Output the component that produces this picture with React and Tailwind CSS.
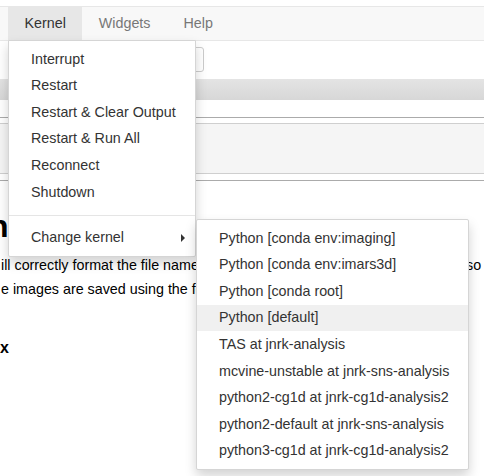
const kernelItems = ["Interrupt", "Restart", "Restart & Clear Output", "Restart & Run All", "Reconnect", "Shutdown"];

const kernels = [
  "Python [conda env:imaging]",
  "Python [conda env:imars3d]",
  "Python [conda root]",
  "Python [default]",
  "TAS at jnrk-analysis",
  "mcvine-unstable at jnrk-sns-analysis",
  "python2-cg1d at jnrk-cg1d-analysis2",
  "python2-default at jnrk-sns-analysis",
  "python3-cg1d at jnrk-cg1d-analysis2",
];

function MenuItem({ label, active, children }) {
  return (
    <li className={`h-[26.6px] flex items-center pl-[22px] pr-[12px] whitespace-nowrap ${active ? "bg-[#f0f0f0]" : ""}`}>
      <span className="flex-1">{label}</span>
      {children}
    </li>
  );
}

export default function App() {
  return (
    <div className="relative w-[484px] h-[476px] overflow-hidden bg-white text-[14.3px] text-[#333] font-['Liberation_Sans',Arial,sans-serif]">
      <div className="h-[6px]" />

      {/* menubar */}
      <div className="h-[35px] border-y border-[#e7e7e7] bg-[#f8f8f8] flex pl-[8px]">
        <div className="px-[16.5px] flex items-center bg-[#e7e7e7] text-[#333]">Kernel</div>
        <div className="px-[16.5px] flex items-center text-[#777]">Widgets</div>
        <div className="px-[16.5px] flex items-center text-[#777]">Help</div>
      </div>

      {/* toolbar */}
      <div className="h-[38px] pt-[6px] flex">
        <div className="ml-[120px] w-[84px] h-[25px] border border-[#ccc] rounded-[3px] bg-white" />
      </div>

      <div className="h-[21px] bg-gradient-to-b from-[#e4e4e4] to-[#d7d7d7]" />
      <div className="h-[17px]" />
      <div className="h-px bg-[#ababab]" />
      <div className="h-[5px]" />
      <div className="h-[51px] border-y border-[#cfcfcf] bg-[#f5f5f5]" />
      <div className="h-[6px]" />
      <div className="h-px bg-[#ababab]" />

      {/* notebook content */}
      <div className="pt-[29px] text-black">
        <div className="h-[32px] leading-[32px] text-[32px] font-bold -ml-[11px]">n</div>
        <div className="mt-[11px] flex whitespace-nowrap leading-[24px]">
          <span className="w-[196px] overflow-hidden pl-[1px]">ill correctly format the file names</span>
          <span className="flex-1" />
          <span className="w-[18px]">so</span>
        </div>
        <div className="w-[196px] overflow-hidden whitespace-nowrap leading-[24px] pl-[1px]">e images are saved using the format</div>
        <div className="mt-[35px] font-bold text-[16px] leading-[24px]">x</div>
      </div>

      {/* Kernel dropdown */}
      <ul className="absolute left-[8px] top-[40px] w-[188px] bg-white border border-[#d5d5d5] rounded-b-[2px] py-[5px] shadow-[0_6px_12px_rgba(0,0,0,0.175)]">
        {kernelItems.map((k) => (
          <MenuItem key={k} label={k} />
        ))}
        <li className="h-px bg-[#e5e5e5] my-[9px]" />
        <MenuItem label="Change kernel">
          <svg width="4" height="8" viewBox="0 0 4 8" className="mr-[-2px]">
            <polygon points="0,0 4,4 0,8" fill="#333" />
          </svg>
        </MenuItem>
      </ul>

      {/* Change kernel submenu */}
      <ul className="absolute left-[196px] top-[219px] w-[273px] bg-white border border-[#d5d5d5] rounded-[2px] py-[5px] shadow-[0_6px_12px_rgba(0,0,0,0.175)]">
        {kernels.map((k) => (
          <MenuItem key={k} label={k} active={k === "Python [default]"} />
        ))}
      </ul>
    </div>
  );
}
